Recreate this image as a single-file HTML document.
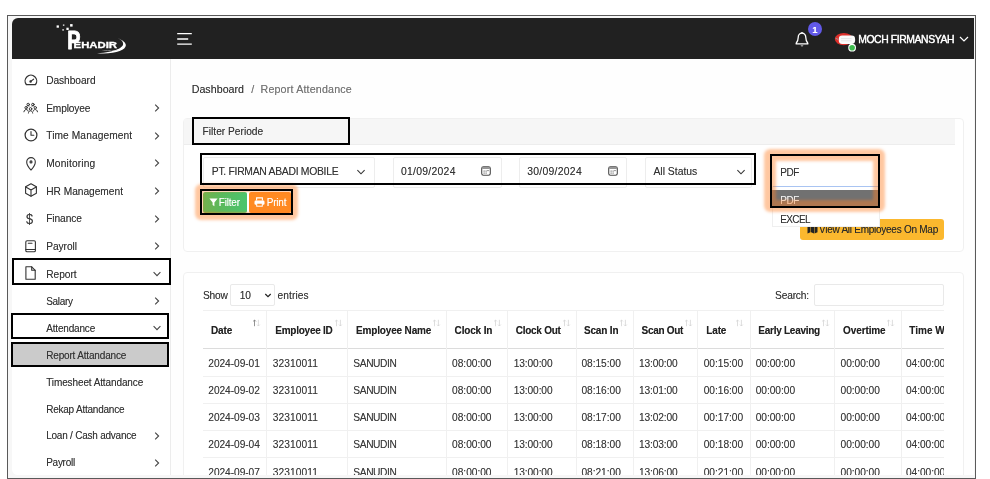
<!DOCTYPE html>
<html lang="en">
<head>
<meta charset="utf-8">
<title>Report Attendance</title>
<style>
*{box-sizing:border-box;margin:0;padding:0}
html,body{width:990px;height:479px;overflow:hidden;background:#fff}
body{font-family:"Liberation Sans",sans-serif;font-size:10.2px;color:#333;position:relative}
div,span,svg{position:absolute}
.t{white-space:nowrap;line-height:12px;height:12px;text-shadow:0 0 .6px rgba(40,40,40,.45)}
#frame{left:7px;top:15px;width:969px;height:464px;border:1px solid #5a5a5a;background:#f7f7f7}
#app{left:12px;top:18px;width:962px;height:457px;border-radius:6px 0 0 6px;overflow:hidden;background:#fefefe}
#hdr{left:0;top:0;width:962px;height:41px;background:#212121}
#side{left:0;top:41px;width:159px;height:417px;background:#fff;border-right:1px solid #ececec}
.mi{left:46px;font-size:10.2px;color:#333}
.bb{border:2px solid #000}
.card{background:#fff;border:1px solid #f0f0f0;border-radius:4px}
.fc{background:#fff;border:1px solid #ededed;border-radius:2px}
.ft{font-size:10.4px;color:#333}
.th{font-weight:bold;font-size:10px;color:#222}
.td{font-size:10.2px;color:#3a3a3a}
.vl{width:1px;background:#f0f0f0}
.hl{height:1px;background:#f0f0f0}
#clip{left:0;top:0;width:974px;height:475px;overflow:hidden;will-change:transform}
</style>
</head>
<body>
<div id="frame"></div>
<div id="app"><div id="hdr"></div><div id="side"></div></div>
<div id="clip">
<svg style="left:50px;top:18px" width="85" height="42" viewBox="0 0 85 42"><g fill="#fff"><rect x="6.6" y="7.4" width="2.3" height="2.3"/><rect x="12.9" y="6.4" width="1.5" height="1.5" opacity=".8"/><rect x="20.1" y="6.1" width="2.5" height="2.5"/><rect x="16.4" y="9.7" width="2.3" height="2.3"/><rect x="12.3" y="11.1" width="1.6" height="1.6" opacity=".8"/></g><text x="17.2" y="30.9" fill="#fff" font-family="Liberation Sans, sans-serif" font-weight="bold" font-size="25" stroke="#fff" stroke-width=".9" stroke-linejoin="round" textLength="13.2" lengthAdjust="spacingAndGlyphs">P</text><text x="23.6" y="30.1" fill="#fff" stroke="#fff" stroke-width=".3" font-family="Liberation Sans, sans-serif" font-weight="bold" font-size="8.5" textLength="43.4" lengthAdjust="spacingAndGlyphs">EHADIR</text><path d="M67.8 20.3 C76 23.2 78.5 32.8 47 35.2 C72 37.2 85.5 27.2 67.8 20.3 Z" fill="#fff"/><text x="52.3" y="32.9" fill="#ccc" font-family="Liberation Sans, sans-serif" font-size="2.4" textLength="14.6" lengthAdjust="spacingAndGlyphs">ATTENDANCE</text></svg>
<svg style="left:176px;top:31px" width="18" height="16" viewBox="0 0 18 16"><g stroke="#fff" stroke-width="1.3" fill="none"><path d="M1.2 2.7H15.8M1.2 8H12.2M1.2 13.2H15.8"/></g></svg>
<svg style="left:793px;top:30.6px" width="18" height="18" viewBox="0 0 18 18"><path d="M9 2.2c-2.3 0-3.8 1.8-3.8 4.4 0 2.6-.6 4-2 5.6v.7h11.6v-.7c-1.4-1.6-2-3-2-5.6 0-2.6-1.5-4.4-3.8-4.4z" fill="none" stroke="#fff" stroke-width="1.3" stroke-linejoin="round"/><path d="M7.6 14.4a1.5 1.5 0 0 0 2.8 0z" fill="#fff"/><circle cx="9" cy="1.8" r="0.9" fill="#fff"/></svg>
<div style="left:808px;top:21.5px;width:14px;height:14px;border-radius:7px;background:#6259e8"></div>
<span class="t " style="left:812.3px;top:24.1px;color:#fff;font-weight:bold;font-size:9.5px;text-shadow:0 0 .6px rgba(255,255,255,.45)">1</span>
<svg style="left:832px;top:30px" width="28" height="24" viewBox="0 0 28 24"><ellipse cx="11.8" cy="9.1" rx="9" ry="6.1" fill="#dd2f2a"/><rect x="6.8" y="5.6" width="16.3" height="8.3" rx="3.4" fill="#fafafa"/><path d="M9 8.6h10.5M9 10.8h10.5" stroke="#ddd" stroke-width=".7"/><path d="M3.5 8.2l2.6 1.2" stroke="#999" stroke-width="1"/><circle cx="20.1" cy="17.7" r="3.9" fill="#fff"/><circle cx="20.1" cy="17.7" r="2.8" fill="#3cba4c"/></svg>
<span class="t " style="left:858.2px;top:34.1px;color:#fff;font-size:10.4px;-webkit-text-stroke:.35px #fff;letter-spacing:-0.41px;text-shadow:0 0 .6px rgba(255,255,255,.45)">MOCH FIRMANSYAH</span>
<svg style="left:959px;top:35px" width="10" height="8" viewBox="0 0 10 8"><path d="M1 2l4 4 4-4" fill="none" stroke="#fff" stroke-width="1.2"/></svg>
<div style="left:13px;top:343.3px;width:153.5px;height:22px;background:#cbcbcb"></div>
<span class="t mi" style="left:46.2px;top:75.2px;letter-spacing:-0.06px">Dashboard</span>
<span class="t mi" style="left:46.2px;top:102.8px;letter-spacing:-0.14px">Employee</span>
<svg style="left:153px;top:103.1px" width="8" height="10" viewBox="0 0 8 10"><path d="M2.2 1.6l3.4 3.4-3.4 3.4" fill="none" stroke="#444" stroke-width="1.1"/></svg>
<span class="t mi" style="left:46.2px;top:130.4px;letter-spacing:0.10px">Time Management</span>
<svg style="left:153px;top:130.7px" width="8" height="10" viewBox="0 0 8 10"><path d="M2.2 1.6l3.4 3.4-3.4 3.4" fill="none" stroke="#444" stroke-width="1.1"/></svg>
<span class="t mi" style="left:46.2px;top:158.0px;letter-spacing:0.17px">Monitoring</span>
<svg style="left:153px;top:158.3px" width="8" height="10" viewBox="0 0 8 10"><path d="M2.2 1.6l3.4 3.4-3.4 3.4" fill="none" stroke="#444" stroke-width="1.1"/></svg>
<span class="t mi" style="left:46.2px;top:185.6px;letter-spacing:-0.02px">HR Management</span>
<svg style="left:153px;top:185.9px" width="8" height="10" viewBox="0 0 8 10"><path d="M2.2 1.6l3.4 3.4-3.4 3.4" fill="none" stroke="#444" stroke-width="1.1"/></svg>
<span class="t mi" style="left:46.2px;top:213.2px;letter-spacing:-0.08px">Finance</span>
<svg style="left:153px;top:213.5px" width="8" height="10" viewBox="0 0 8 10"><path d="M2.2 1.6l3.4 3.4-3.4 3.4" fill="none" stroke="#444" stroke-width="1.1"/></svg>
<span class="t mi" style="left:46.2px;top:240.8px;letter-spacing:-0.06px">Payroll</span>
<svg style="left:153px;top:241.1px" width="8" height="10" viewBox="0 0 8 10"><path d="M2.2 1.6l3.4 3.4-3.4 3.4" fill="none" stroke="#444" stroke-width="1.1"/></svg>
<span class="t mi" style="left:46.2px;top:268.5px;letter-spacing:-0.03px">Report</span>
<svg style="left:152px;top:269.8px" width="10" height="8" viewBox="0 0 10 8"><path d="M1.6 2.2l3.4 3.4 3.4-3.4" fill="none" stroke="#444" stroke-width="1.1"/></svg>
<span class="t mi" style="left:46.2px;top:295.9px;font-size:10px;letter-spacing:-0.29px">Salary</span>
<svg style="left:153px;top:296.2px" width="8" height="10" viewBox="0 0 8 10"><path d="M2.2 1.6l3.4 3.4-3.4 3.4" fill="none" stroke="#444" stroke-width="1.1"/></svg>
<span class="t mi" style="left:46.2px;top:322.8px;font-size:10px;letter-spacing:-0.17px">Attendance</span>
<svg style="left:152px;top:324.1px" width="10" height="8" viewBox="0 0 10 8"><path d="M1.6 2.2l3.4 3.4 3.4-3.4" fill="none" stroke="#444" stroke-width="1.1"/></svg>
<span class="t mi" style="left:46.2px;top:349.7px;font-size:10px;letter-spacing:-0.17px">Report Attandance</span>
<span class="t mi" style="left:46.2px;top:376.6px;font-size:10px;letter-spacing:-0.11px">Timesheet Attandance</span>
<span class="t mi" style="left:46.2px;top:403.5px;font-size:10px;letter-spacing:-0.23px">Rekap Attandance</span>
<span class="t mi" style="left:46.2px;top:430.4px;font-size:10px;letter-spacing:-0.23px">Loan / Cash advance</span>
<svg style="left:153px;top:430.7px" width="8" height="10" viewBox="0 0 8 10"><path d="M2.2 1.6l3.4 3.4-3.4 3.4" fill="none" stroke="#444" stroke-width="1.1"/></svg>
<span class="t mi" style="left:46.2px;top:457.3px;font-size:10px;letter-spacing:-0.27px">Payroll</span>
<svg style="left:153px;top:457.6px" width="8" height="10" viewBox="0 0 8 10"><path d="M2.2 1.6l3.4 3.4-3.4 3.4" fill="none" stroke="#444" stroke-width="1.1"/></svg>
<svg style="left:22.5px;top:72px" width="16" height="16" viewBox="0 0 16 16" fill="none" stroke="#333" stroke-width="1.1" stroke-linecap="round" stroke-linejoin="round"><path d="M3.3 12.5A5.8 5.8 0 1 1 12.5 12.5Z" stroke-width="1.250"/><path d="M7.6 9.4l3-2.2"/><circle cx="7.6" cy="9.4" r=".7" fill="#333"/></svg>
<svg style="left:22.5px;top:99.6px" width="16" height="16" viewBox="0 0 16 16" fill="none" stroke="#333" stroke-width="1.1" stroke-linecap="round" stroke-linejoin="round"><g stroke-width="1"><circle cx="5.2" cy="4.5" r="1.250"/><circle cx="9.9" cy="4.5" r="1.250"/><circle cx="3.1" cy="7.7" r="1.2"/><circle cx="7.550" cy="8.9" r="1.3"/><circle cx="12.3" cy="7.7" r="1.2"/><path d="M.9 11.8c.2-3 4.2-3 4.4-.6M5.4 13.1c.2-3.2 4.1-3.2 4.3 0M10.1 11.2c.2-2.4 4.2-2.4 4.4.6M3.9 6.1c.4-.5 1.4-.6 2.2-.2M8.9 5.9c.8-.4 1.8-.3 2.2.2"/></g></svg>
<svg style="left:22.5px;top:127.2px" width="16" height="16" viewBox="0 0 16 16" fill="none" stroke="#333" stroke-width="1.1" stroke-linecap="round" stroke-linejoin="round"><circle cx="8" cy="8" r="5.9" stroke-width="1.250"/><path d="M8 4.6V8.2h2.8"/></svg>
<svg style="left:22.5px;top:154.7px" width="16" height="16" viewBox="0 0 16 16" fill="none" stroke="#333" stroke-width="1.1" stroke-linecap="round" stroke-linejoin="round"><path d="M8 15s-4.3-4.6-4.3-8.1a4.3 4.3 0 0 1 8.6 0c0 3.5-4.3 8.1-4.3 8.1z"/><circle cx="8" cy="6.9" r="1"/></svg>
<svg style="left:22.5px;top:182.4px" width="16" height="16" viewBox="0 0 16 16" fill="none" stroke="#333" stroke-width="1.1" stroke-linecap="round" stroke-linejoin="round"><path d="M8 1.8l5.4 3v6.4l-5.4 3-5.4-3V4.8z"/><path d="M2.8 4.9L8 7.9l5.2-3M8 7.9v6.1"/></svg>
<span class="t " style="left:25.7px;top:212.6px;font-size:14.5px;color:#3a3a3a;transform:scaleX(.88);transform-origin:0 50%">$</span>
<svg style="left:22.5px;top:237.8px" width="16" height="16" viewBox="0 0 16 16" fill="none" stroke="#333" stroke-width="1.1" stroke-linecap="round" stroke-linejoin="round"><rect x="2.8" y="2.7" width="9.6" height="11" rx="1.3"/><path d="M5.3 5.3h3.7M2.8 11.5h9.6"/></svg>
<svg style="left:22.5px;top:265.4px" width="16" height="16" viewBox="0 0 16 16" fill="none" stroke="#333" stroke-width="1.1" stroke-linecap="round" stroke-linejoin="round"><path d="M2.9 1.8h5.8l3.5 3.5v8.9H2.9z"/><path d="M8.7 1.8v3.5h3.5"/></svg>
<div class="bb" style="left:12px;top:258px;width:158.5px;height:27px"></div>
<div class="bb" style="left:11px;top:313.3px;width:158px;height:25.7px"></div>
<div class="bb" style="left:11px;top:341.5px;width:158px;height:25.8px"></div>
<span class="t " style="left:191.7px;top:83.4px;font-size:10.7px;color:#333;letter-spacing:0.01px">Dashboard</span>
<span class="t " style="left:251.3px;top:83.4px;font-size:10.7px;color:#777">/</span>
<span class="t " style="left:260.5px;top:83.4px;font-size:10.7px;color:#777;letter-spacing:0.17px">Report Attendance</span>
<div class="card" style="left:183px;top:117.5px;width:780.5px;height:134px"></div>
<div style="left:184px;top:118.5px;width:771px;height:26.5px;background:#f6f6f6;border-bottom:1px solid #ededed"></div>
<span class="t ft" style="left:202.6px;top:126.2px;font-size:10.2px;letter-spacing:0.00px">Filter Periode</span>
<div class="bb" style="left:192px;top:117px;width:158px;height:27.5px"></div>
<div class="fc" style="left:203px;top:156.5px;width:171.6px;height:31.0px"></div>
<span class="t ft" style="left:211.8px;top:166.2px;letter-spacing:-0.30px">PT. FIRMAN ABADI MOBILE</span>
<svg style="left:356px;top:168px" width="10" height="8" viewBox="0 0 10 8"><path d="M1.4 2.2l3.6 3.6 3.6-3.6" fill="none" stroke="#333" stroke-width="1.1"/></svg>
<div class="fc" style="left:392.5px;top:156.5px;width:109.5px;height:31.0px"></div>
<span class="t ft" style="left:400.9px;top:166.2px;letter-spacing:0.28px">01/09/2024</span>
<svg style="left:481.3px;top:166px" width="10" height="10" viewBox="0 0 10 10"><rect x=".7" y=".7" width="8.6" height="8.6" rx="1.7" fill="#fff" stroke="#4a4a4a" stroke-width="1.1"/><rect x="1.2" y="1.2" width="7.6" height="1.7" fill="#8a8a8a"/><g fill="#333"><circle cx="3.1" cy="5" r=".6"/><circle cx="5.1" cy="5" r=".6"/><circle cx="7" cy="4.6" r=".6"/><circle cx="3.1" cy="7" r=".6"/><circle cx="5.1" cy="7" r=".6"/></g></svg>
<div class="fc" style="left:519px;top:156.5px;width:108.3px;height:31.0px"></div>
<span class="t ft" style="left:527.2px;top:166.2px;letter-spacing:0.28px">30/09/2024</span>
<svg style="left:607.5px;top:166px" width="10" height="10" viewBox="0 0 10 10"><rect x=".7" y=".7" width="8.6" height="8.6" rx="1.7" fill="#fff" stroke="#4a4a4a" stroke-width="1.1"/><rect x="1.2" y="1.2" width="7.6" height="1.7" fill="#8a8a8a"/><g fill="#333"><circle cx="3.1" cy="5" r=".6"/><circle cx="5.1" cy="5" r=".6"/><circle cx="7" cy="4.6" r=".6"/><circle cx="3.1" cy="7" r=".6"/><circle cx="5.1" cy="7" r=".6"/></g></svg>
<div class="fc" style="left:644.7px;top:156.5px;width:107.3px;height:31.0px"></div>
<span class="t ft" style="left:653.4px;top:166.2px;letter-spacing:-0.00px">All Status</span>
<svg style="left:735.5px;top:168px" width="10" height="8" viewBox="0 0 10 8"><path d="M1.4 2.2l3.6 3.6 3.6-3.6" fill="none" stroke="#333" stroke-width="1.1"/></svg>
<div style="left:800px;top:219.4px;width:144px;height:20.3px;background:#fbb82e;border-radius:3px"></div>
<svg style="left:806.5px;top:223.5px" width="11" height="10" viewBox="0 0 11 10"><path d="M.5 2l3-1.2v7.4l-3 1.2zM4 .8l3 1.2v7.4l-3-1.2zM7.5 2l3-1.2v7.4l-3 1.2z" fill="#222"/></svg>
<span class="t " style="left:819px;top:223.7px;font-size:10px;color:#2a2a2a;letter-spacing:-0.26px">View All Employees On Map</span>
<div style="left:771.5px;top:186px;width:108.5px;height:40.5px;background:#fff;border:1px solid #efefef;border-top:none"></div>
<div style="left:772px;top:189.5px;width:107px;height:16.5px;background:#717171"></div>
<span class="t ft" style="left:780.3px;top:194.9px;color:#f2f2f2;font-size:10px;letter-spacing:-0.43px;text-shadow:0 0 .6px rgba(255,255,255,.45)">PDF</span>
<span class="t ft" style="left:780.3px;top:213.5px;font-size:10px;letter-spacing:-0.64px">EXCEL</span>
<div style="left:772.5px;top:186px;width:105px;height:1px;background:#a9c4f2"></div>
<span class="t ft" style="left:780.3px;top:166.7px;font-size:10px;letter-spacing:-0.43px">PDF</span>
<div style="left:770px;top:154.5px;width:108.8px;height:51px;border-radius:2px;box-shadow:0 0 3px 6px rgba(255,128,38,.44), inset 0 0 3px 6px rgba(255,128,38,.44)"></div>
<div class="bb" style="left:770px;top:153.8px;width:110px;height:54px"></div>
<div style="left:203px;top:192px;width:43.5px;height:20.8px;background:linear-gradient(90deg,#74b04d 0%,#5bb95c 40%,#4bc56d 100%);border-radius:2px"></div>
<div style="left:249px;top:192px;width:42.2px;height:20.8px;background:#ff8a22;border-radius:2px"></div>
<svg style="left:208.8px;top:197.8px" width="9" height="9" viewBox="0 0 9 9"><path d="M.4.6h8.2L5.4 4.4v3.8L3.6 7V4.4z" fill="#fff"/></svg>
<span class="t " style="left:218.8px;top:197.1px;color:#fff;font-size:10px;letter-spacing:-0.21px;text-shadow:0 0 .6px rgba(255,255,255,.45)">Filter</span>
<svg style="left:254.3px;top:197px" width="11" height="10" viewBox="0 0 11 10"><path d="M2.6 3.6V.900h5.8v2.7" fill="none" stroke="#fff" stroke-width="1.1"/><rect x=".5" y="3.6" width="10" height="4.2" rx="1.2" fill="#fff"/><rect x="2.7" y="6.2" width="5.6" height="3" fill="#ff8a22" stroke="#fff" stroke-width="1"/></svg>
<span class="t " style="left:266.7px;top:197.1px;color:#fff;font-size:10px;letter-spacing:-0.19px;text-shadow:0 0 .6px rgba(255,255,255,.45)">Print</span>
<div style="left:201px;top:189.8px;width:91.3px;height:24px;border-radius:2px;box-shadow:0 0 3px 6px rgba(255,128,38,.44), inset 0 0 2px 2px rgba(255,128,38,.44)"></div>
<div class="bb" style="left:200px;top:188.8px;width:93.3px;height:26px"></div>
<div class="bb" style="left:200px;top:153.4px;width:556.4px;height:32px"></div>
<div class="card" style="left:183px;top:272px;width:780.5px;height:230px"></div>
<span class="t td" style="left:203px;top:289.9px;color:#333;letter-spacing:-0.17px">Show</span>
<div class="fc" style="left:230.2px;top:283.7px;width:44.7px;height:22.8px;border-color:#e9e9e9"></div>
<span class="t td" style="left:239.8px;top:289.9px;color:#333;letter-spacing:-0.27px">10</span>
<svg style="left:263.5px;top:292px" width="8" height="7" viewBox="0 0 8 7"><path d="M1.3 2l2.7 2.7L6.7 2" fill="none" stroke="#222" stroke-width="1.2"/></svg>
<span class="t td" style="left:277.6px;top:289.9px;color:#333;letter-spacing:0.06px">entries</span>
<span class="t td" style="left:775.1px;top:289.9px;color:#333;letter-spacing:-0.19px">Search:</span>
<div class="fc" style="left:813.9px;top:283.7px;width:130.1px;height:22.8px;border-color:#e9e9e9"></div>
<div class="hl" style="left:203px;top:310px;width:741px"></div>
<div class="hl" style="left:203px;top:347.5px;width:741px;height:1.5px;background:#dcdcdc"></div>
<div class="hl" style="left:203px;top:376.0px;width:741px"></div>
<div class="hl" style="left:203px;top:403.0px;width:741px"></div>
<div class="hl" style="left:203px;top:430.0px;width:741px"></div>
<div class="hl" style="left:203px;top:457.0px;width:741px"></div>
<div class="vl" style="left:266px;top:310px;width:1px;height:170px"></div>
<div class="vl" style="left:347.3px;top:310px;width:1px;height:170px"></div>
<div class="vl" style="left:446px;top:310px;width:1px;height:170px"></div>
<div class="vl" style="left:507.3px;top:310px;width:1px;height:170px"></div>
<div class="vl" style="left:575.7px;top:310px;width:1px;height:170px"></div>
<div class="vl" style="left:633px;top:310px;width:1px;height:170px"></div>
<div class="vl" style="left:697px;top:310px;width:1px;height:170px"></div>
<div class="vl" style="left:749.7px;top:310px;width:1px;height:170px"></div>
<div class="vl" style="left:834.2px;top:310px;width:1px;height:170px"></div>
<div class="vl" style="left:900.5px;top:310px;width:1px;height:170px"></div>
<div style="left:203px;top:306px;width:741px;height:175px;overflow:hidden">
<span class="t th" style="left:7.9px;top:19.3px;letter-spacing:-0.12px">Date</span>
<svg style="left:49.3px;top:12.8px" width="9" height="8" viewBox="0 0 9 8"><path d="M2.5 7.2V1M1.1 2.4L2.5 1l1.4 1.4" fill="none" stroke="#777" stroke-width=".8"/><path d="M6.4 .8v6.2M5 5.6l1.4 1.4 1.4-1.4" fill="none" stroke="#d4d4d4" stroke-width=".8"/></svg>
<span class="t th" style="left:72.3px;top:19.3px;letter-spacing:-0.25px">Employee ID</span>
<svg style="left:130.5px;top:12.8px" width="9" height="8" viewBox="0 0 9 8"><path d="M2.5 7.2V1M1.1 2.4L2.5 1l1.4 1.4" fill="none" stroke="#d4d4d4" stroke-width=".8"/><path d="M6.4 .8v6.2M5 5.6l1.4 1.4 1.4-1.4" fill="none" stroke="#d4d4d4" stroke-width=".8"/></svg>
<span class="t th" style="left:153.1px;top:19.3px;letter-spacing:-0.17px">Employee Name</span>
<svg style="left:229.3px;top:12.8px" width="9" height="8" viewBox="0 0 9 8"><path d="M2.5 7.2V1M1.1 2.4L2.5 1l1.4 1.4" fill="none" stroke="#d4d4d4" stroke-width=".8"/><path d="M6.4 .8v6.2M5 5.6l1.4 1.4 1.4-1.4" fill="none" stroke="#d4d4d4" stroke-width=".8"/></svg>
<span class="t th" style="left:251.6px;top:19.3px;letter-spacing:-0.16px">Clock In</span>
<svg style="left:289.9px;top:12.8px" width="9" height="8" viewBox="0 0 9 8"><path d="M2.5 7.2V1M1.1 2.4L2.5 1l1.4 1.4" fill="none" stroke="#d4d4d4" stroke-width=".8"/><path d="M6.4 .8v6.2M5 5.6l1.4 1.4 1.4-1.4" fill="none" stroke="#d4d4d4" stroke-width=".8"/></svg>
<span class="t th" style="left:312.7px;top:19.3px;letter-spacing:-0.25px">Clock Out</span>
<svg style="left:358.5px;top:12.8px" width="9" height="8" viewBox="0 0 9 8"><path d="M2.5 7.2V1M1.1 2.4L2.5 1l1.4 1.4" fill="none" stroke="#d4d4d4" stroke-width=".8"/><path d="M6.4 .8v6.2M5 5.6l1.4 1.4 1.4-1.4" fill="none" stroke="#d4d4d4" stroke-width=".8"/></svg>
<span class="t th" style="left:380.9px;top:19.3px;letter-spacing:-0.14px">Scan In</span>
<svg style="left:416.3px;top:12.8px" width="9" height="8" viewBox="0 0 9 8"><path d="M2.5 7.2V1M1.1 2.4L2.5 1l1.4 1.4" fill="none" stroke="#d4d4d4" stroke-width=".8"/><path d="M6.4 .8v6.2M5 5.6l1.4 1.4 1.4-1.4" fill="none" stroke="#d4d4d4" stroke-width=".8"/></svg>
<span class="t th" style="left:438.5px;top:19.3px;letter-spacing:-0.29px">Scan Out</span>
<svg style="left:480.5px;top:12.8px" width="9" height="8" viewBox="0 0 9 8"><path d="M2.5 7.2V1M1.1 2.4L2.5 1l1.4 1.4" fill="none" stroke="#d4d4d4" stroke-width=".8"/><path d="M6.4 .8v6.2M5 5.6l1.4 1.4 1.4-1.4" fill="none" stroke="#d4d4d4" stroke-width=".8"/></svg>
<span class="t th" style="left:503.3px;top:19.3px;letter-spacing:-0.17px">Late</span>
<svg style="left:532.4px;top:12.8px" width="9" height="8" viewBox="0 0 9 8"><path d="M2.5 7.2V1M1.1 2.4L2.5 1l1.4 1.4" fill="none" stroke="#d4d4d4" stroke-width=".8"/><path d="M6.4 .8v6.2M5 5.6l1.4 1.4 1.4-1.4" fill="none" stroke="#d4d4d4" stroke-width=".8"/></svg>
<span class="t th" style="left:555.3px;top:19.3px;letter-spacing:-0.26px">Early Leaving</span>
<svg style="left:617.9px;top:12.8px" width="9" height="8" viewBox="0 0 9 8"><path d="M2.5 7.2V1M1.1 2.4L2.5 1l1.4 1.4" fill="none" stroke="#d4d4d4" stroke-width=".8"/><path d="M6.4 .8v6.2M5 5.6l1.4 1.4 1.4-1.4" fill="none" stroke="#d4d4d4" stroke-width=".8"/></svg>
<span class="t th" style="left:640.1px;top:19.3px;letter-spacing:-0.11px">Overtime</span>
<svg style="left:683.3px;top:12.8px" width="9" height="8" viewBox="0 0 9 8"><path d="M2.5 7.2V1M1.1 2.4L2.5 1l1.4 1.4" fill="none" stroke="#d4d4d4" stroke-width=".8"/><path d="M6.4 .8v6.2M5 5.6l1.4 1.4 1.4-1.4" fill="none" stroke="#d4d4d4" stroke-width=".8"/></svg>
<span class="t th" style="left:706.3px;top:19.3px;">Time Work</span>
<span class="t td" style="left:5.3px;top:52.1px;letter-spacing:-0.06px">2024-09-01</span>
<span class="t td" style="left:69.7px;top:52.1px;letter-spacing:0.08px">32310011</span>
<span class="t td" style="left:150.3px;top:52.1px;letter-spacing:-0.38px">SANUDIN</span>
<span class="t td" style="left:249.1px;top:52.1px;letter-spacing:-0.03px">08:00:00</span>
<span class="t td" style="left:310.7px;top:52.1px;letter-spacing:-0.11px">13:00:00</span>
<span class="t td" style="left:378.4px;top:52.1px;letter-spacing:-0.03px">08:15:00</span>
<span class="t td" style="left:435.9px;top:52.1px;letter-spacing:-0.11px">13:00:00</span>
<span class="t td" style="left:500.7px;top:52.1px;letter-spacing:-0.03px">00:15:00</span>
<span class="t td" style="left:552.7px;top:52.1px;letter-spacing:-0.04px">00:00:00</span>
<span class="t td" style="left:637.5px;top:52.1px;letter-spacing:-0.04px">00:00:00</span>
<span class="t td" style="left:702.9px;top:52.1px;letter-spacing:-0.04px">04:00:00</span>
<span class="t td" style="left:5.3px;top:79.2px;letter-spacing:-0.06px">2024-09-02</span>
<span class="t td" style="left:69.7px;top:79.2px;letter-spacing:0.08px">32310011</span>
<span class="t td" style="left:150.3px;top:79.2px;letter-spacing:-0.38px">SANUDIN</span>
<span class="t td" style="left:249.1px;top:79.2px;letter-spacing:-0.03px">08:00:00</span>
<span class="t td" style="left:310.7px;top:79.2px;letter-spacing:-0.11px">13:00:00</span>
<span class="t td" style="left:378.4px;top:79.2px;letter-spacing:-0.03px">08:16:00</span>
<span class="t td" style="left:435.9px;top:79.2px;letter-spacing:-0.11px">13:01:00</span>
<span class="t td" style="left:500.7px;top:79.2px;letter-spacing:-0.03px">00:16:00</span>
<span class="t td" style="left:552.7px;top:79.2px;letter-spacing:-0.04px">00:00:00</span>
<span class="t td" style="left:637.5px;top:79.2px;letter-spacing:-0.04px">00:00:00</span>
<span class="t td" style="left:702.9px;top:79.2px;letter-spacing:-0.04px">04:00:00</span>
<span class="t td" style="left:5.3px;top:106.3px;letter-spacing:-0.06px">2024-09-03</span>
<span class="t td" style="left:69.7px;top:106.3px;letter-spacing:0.08px">32310011</span>
<span class="t td" style="left:150.3px;top:106.3px;letter-spacing:-0.38px">SANUDIN</span>
<span class="t td" style="left:249.1px;top:106.3px;letter-spacing:-0.03px">08:00:00</span>
<span class="t td" style="left:310.7px;top:106.3px;letter-spacing:-0.11px">13:00:00</span>
<span class="t td" style="left:378.4px;top:106.3px;letter-spacing:-0.03px">08:17:00</span>
<span class="t td" style="left:435.9px;top:106.3px;letter-spacing:-0.11px">13:02:00</span>
<span class="t td" style="left:500.7px;top:106.3px;letter-spacing:-0.03px">00:17:00</span>
<span class="t td" style="left:552.7px;top:106.3px;letter-spacing:-0.04px">00:00:00</span>
<span class="t td" style="left:637.5px;top:106.3px;letter-spacing:-0.04px">00:00:00</span>
<span class="t td" style="left:702.9px;top:106.3px;letter-spacing:-0.04px">04:00:00</span>
<span class="t td" style="left:5.3px;top:133.4px;letter-spacing:-0.06px">2024-09-04</span>
<span class="t td" style="left:69.7px;top:133.4px;letter-spacing:0.08px">32310011</span>
<span class="t td" style="left:150.3px;top:133.4px;letter-spacing:-0.38px">SANUDIN</span>
<span class="t td" style="left:249.1px;top:133.4px;letter-spacing:-0.03px">08:00:00</span>
<span class="t td" style="left:310.7px;top:133.4px;letter-spacing:-0.11px">13:00:00</span>
<span class="t td" style="left:378.4px;top:133.4px;letter-spacing:-0.03px">08:18:00</span>
<span class="t td" style="left:435.9px;top:133.4px;letter-spacing:-0.11px">13:03:00</span>
<span class="t td" style="left:500.7px;top:133.4px;letter-spacing:-0.03px">00:18:00</span>
<span class="t td" style="left:552.7px;top:133.4px;letter-spacing:-0.04px">00:00:00</span>
<span class="t td" style="left:637.5px;top:133.4px;letter-spacing:-0.04px">00:00:00</span>
<span class="t td" style="left:702.9px;top:133.4px;letter-spacing:-0.04px">04:00:00</span>
<span class="t td" style="left:5.3px;top:160.5px;letter-spacing:-0.06px">2024-09-07</span>
<span class="t td" style="left:69.7px;top:160.5px;letter-spacing:0.08px">32310011</span>
<span class="t td" style="left:150.3px;top:160.5px;letter-spacing:-0.38px">SANUDIN</span>
<span class="t td" style="left:249.1px;top:160.5px;letter-spacing:-0.03px">08:00:00</span>
<span class="t td" style="left:310.7px;top:160.5px;letter-spacing:-0.11px">13:00:00</span>
<span class="t td" style="left:378.4px;top:160.5px;letter-spacing:-0.03px">08:21:00</span>
<span class="t td" style="left:435.9px;top:160.5px;letter-spacing:-0.11px">13:06:00</span>
<span class="t td" style="left:500.7px;top:160.5px;letter-spacing:-0.03px">00:21:00</span>
<span class="t td" style="left:552.7px;top:160.5px;letter-spacing:-0.04px">00:00:00</span>
<span class="t td" style="left:637.5px;top:160.5px;letter-spacing:-0.04px">00:00:00</span>
<span class="t td" style="left:702.9px;top:160.5px;letter-spacing:-0.04px">04:00:00</span>
</div>
</div>
</body>
</html>
